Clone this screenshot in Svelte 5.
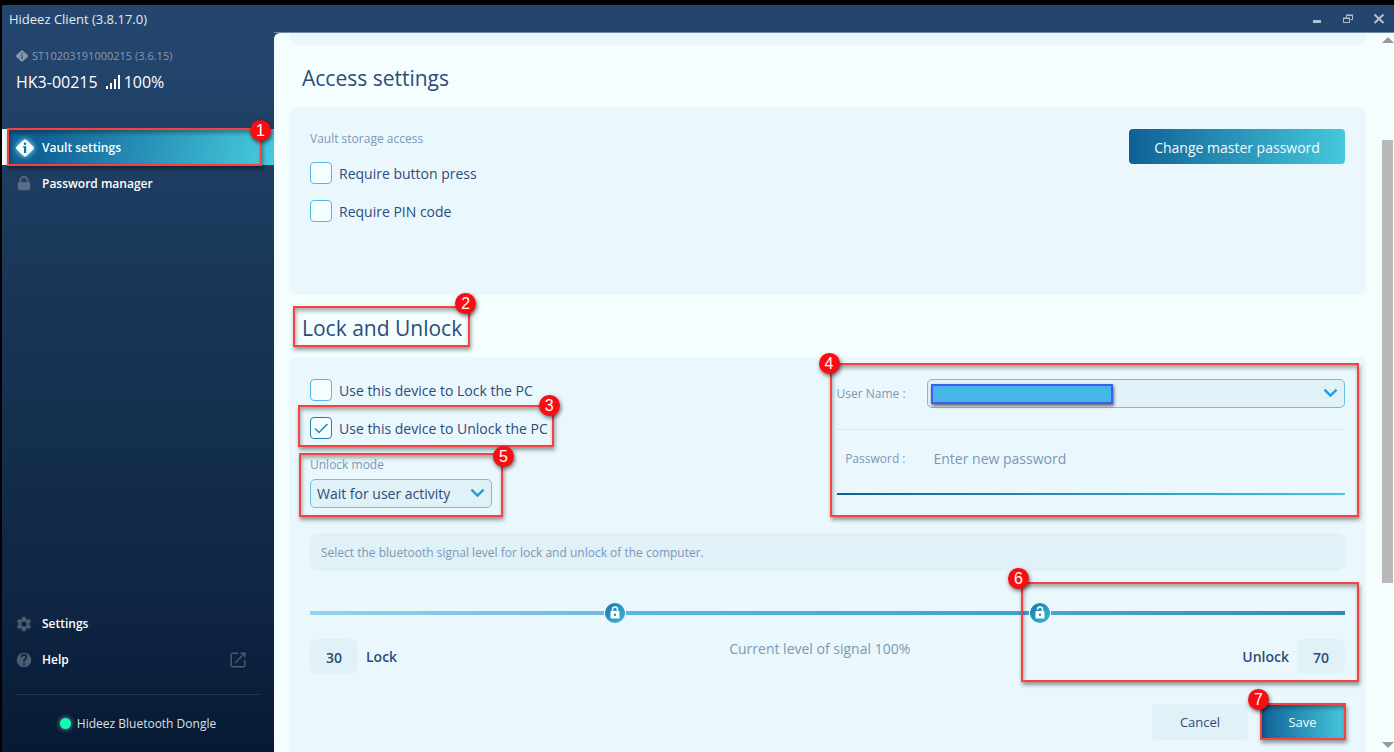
<script>
  let requireButton = $state(false);
  let requirePin = $state(false);
  let useLock = $state(false);
  let useUnlock = $state(true);
  let lockLevel = $state(30);
  let unlockLevel = $state(70);

  // The track overshoots the 0-100 scale slightly at both ends.
  const place = (level) => 50 + (level - 50) * 1.025;
</script>

{#snippet callout(n, kind)}
  <span class="callout {kind}"><span class="badge">{n}</span></span>
{/snippet}

{#snippet vault()}
  <svg viewBox="0 0 18 18" aria-hidden="true">
    <path d="M7.600 1a2 2 0 0 1 2.800 0l6.900 6.600a2 2 0 0 1 0 2.800L10.400 17a2 2 0 0 1-2.800 0L.7 10.400a2 2 0 0 1 0-2.800z" fill="currentColor" />
    <circle cx="9" cy="4.800" r="1.200" fill="var(--hole)" />
    <path d="M7 7.200h3.200V14H8V8.500H7z" fill="var(--hole)" />
  </svg>
{/snippet}

{#snippet chevron()}
  <svg class="chevron" viewBox="0 0 16 10" aria-hidden="true">
    <path d="M1.500 1.500 8 7.800l6.500-6.300" fill="none" stroke="#1d9fda" stroke-width="2.600" />
  </svg>
{/snippet}

{#snippet tick()}
  <svg class="tick" viewBox="0 0 22 22" aria-hidden="true">
    <path d="m5 11.500 4 4L17.500 7" fill="none" stroke="#2288b5" stroke-width="1.500" />
  </svg>
{/snippet}

<div class="window">
  <header>
    <span class="title">Hideez Client (3.8.17.0)</span>
    <div class="controls">
      <button aria-label="Minimize"><svg viewBox="0 0 12 12"><path d="M2 8.500h8" stroke="currentColor" stroke-width="3" /></svg></button>
      <button aria-label="Restore"><svg viewBox="0 0 12 12" fill="none" stroke="currentColor"><path d="M1.500 5.500h6v4h-6zM1 5h7M4.500 4.500v-2h6v4h-2M4 2h7" /></svg></button>
      <button aria-label="Close"><svg viewBox="0 0 12 12"><path d="m1.500 1.500 9 8.500m0-8.500-9 8.500" stroke="currentColor" stroke-width="2" /></svg></button>
    </div>
  </header>

  <div class="body">
    <aside>
      <div class="device">
        <div class="serial">{@render vault()}<span>ST10203191000215 (3.6.15)</span></div>
        <div class="name">
          <span>HK3-00215</span>
          <svg viewBox="0 0 14 14" fill="currentColor" aria-hidden="true"><path d="M0 11h2v3H0zM4 8h2v6H4zM8 4h2v10H8zM12 0h2v14h-2z" /></svg>
          <span>100%</span>
        </div>
      </div>

      <nav>
        <a href="#vault" class="active">
          {@render vault()}<span>Vault settings</span>
          {@render callout(1, 'c1')}
        </a>
        <a href="#passwords">
          <svg viewBox="0 0 18 18" aria-hidden="true"><path d="M5 8V5a4 4 0 0 1 8 0V8" fill="none" stroke="currentColor" stroke-width="2" /><rect x="2" y="7" width="14" height="9" rx="1" fill="currentColor" /></svg>
          <span>Password manager</span>
        </a>
      </nav>

      <nav class="lower">
        <a href="#settings">
          <svg viewBox="1 1 22 22" fill="currentColor" aria-hidden="true"><path d="M19.400 13a7.500 7.500 0 0 0 0-2l2.100-1.600a.5.5 0 0 0 .1-.6l-2-3.500a.5.5 0 0 0-.6-.2l-2.500 1a7.300 7.300 0 0 0-1.700-1l-.4-2.600a.5.5 0 0 0-.5-.5h-4a.5.5 0 0 0-.5.5L9 5.100a7.300 7.300 0 0 0-1.700 1l-2.500-1a.5.5 0 0 0-.6.2l-2 3.500a.5.5 0 0 0 .1.600L4.500 11a7.500 7.500 0 0 0 0 2l-2.200 1.600a.5.5 0 0 0-.1.600l2 3.500c.1.200.4.300.6.200l2.500-1c.5.400 1.100.7 1.700 1l.4 2.600c0 .3.200.5.5.5h4c.3 0 .5-.2.500-.5l.4-2.600a7.300 7.300 0 0 0 1.700-1l2.500 1c.2.100.5 0 .6-.2l2-3.500a.5.5 0 0 0-.1-.6zM12 15.500a3.500 3.500 0 1 1 0-7 3.500 3.500 0 0 1 0 7z" /></svg>
          <span>Settings</span>
        </a>
        <a href="#help">
          <svg viewBox="1 1 22 22" fill="currentColor" aria-hidden="true"><path d="M12 2a10 10 0 1 0 0 20 10 10 0 0 0 0-20zm1.200 17h-2.400v-2.400h2.400zm2.300-8.700-1 1c-.9.900-1.300 1.500-1.300 3.200h-2.400V14c0-1.200.5-2.300 1.300-3.100l1.300-1.300A2 2 0 1 0 10 8.200H7.600a4.400 4.400 0 1 1 8.800 0c0 .8-.4 1.600-.9 2.100z" /></svg>
          <span>Help</span>
          <svg class="external" viewBox="0 0 16 16" fill="none" stroke="currentColor" stroke-width="1.400" aria-hidden="true"><path d="M8 1.200H2.200a1 1 0 0 0-1 1v11.600a1 1 0 0 0 1 1h11.600a1 1 0 0 0 1-1V8M5 11l9.500-9.500M10.500 1.200h4.300v4.300" /></svg>
        </a>
      </nav>
      <div class="dongle"><i></i><span>Hideez Bluetooth Dongle</span></div>
    </aside>

    <main>
      <div class="content">
        <div class="card previous"></div>
        <h2>Access settings</h2>
        <section class="card access">
          <div>
            <p class="caption">Vault storage access</p>
            <label class="check"><span class="box"><input type="checkbox" bind:checked={requireButton} />{@render tick()}</span>Require button press</label>
            <label class="check"><span class="box"><input type="checkbox" bind:checked={requirePin} />{@render tick()}</span>Require PIN code</label>
          </div>
          <button class="primary master">Change master password</button>
        </section>

        <h2><span class="anchor">Lock and Unlock{@render callout(2, 'c2')}</span></h2>
        <section class="card lock">
          <div class="columns">
            <div class="options">
              <label class="check"><span class="box"><input type="checkbox" bind:checked={useLock} />{@render tick()}</span>Use this device to Lock the PC</label>
              <label class="check"><span class="box"><input type="checkbox" bind:checked={useUnlock} />{@render tick()}</span>Use this device to Unlock the PC{@render callout(3, 'c3')}</label>
              <div class="mode">
                <label for="mode" class="caption">Unlock mode</label>
                <div class="field">
                  <select id="mode"><option>Wait for user activity</option></select>
                  {@render chevron()}
                </div>
                {@render callout(5, 'c5')}
              </div>
            </div>

            <div class="account">
              <div class="line user">
                <label for="user">User Name :</label>
                <div class="field">
                  <select id="user"><option></option></select>
                  <span class="redacted"></span>
                  {@render chevron()}
                </div>
              </div>
              <div class="line secret">
                <label for="password">Password :</label>
                <input id="password" type="password" placeholder="Enter new password" />
              </div>
              {@render callout(4, 'c4')}
            </div>
          </div>

          <p class="hint">Select the bluetooth signal level for lock and unlock of the computer.</p>

          <div class="signal">
            <div class="slider">
              <span class="track low" style="width:{place(lockLevel)}%"></span>
              <span class="track mid" style="width:{place(unlockLevel) - place(lockLevel)}%"></span>
              <span class="track high"></span>
              <input type="range" aria-label="Lock level" bind:value={lockLevel} />
              <input type="range" aria-label="Unlock level" bind:value={unlockLevel} />
              <span class="thumb" style="left:{place(lockLevel)}%">
                <svg viewBox="0 0 20 20" aria-hidden="true"><path d="M7.500 9V6.500a2.500 2.500 0 0 1 5 0V9" fill="none" stroke="#fff" stroke-width="1.500" /><rect x="5.500" y="8" width="9" height="7.500" rx="1" fill="#fff" /><circle cx="10" cy="11.800" r="1.200" fill="#238bb3" /></svg>
              </span>
              <span class="thumb" style="left:{place(unlockLevel)}%">
                <svg viewBox="0 0 20 20" aria-hidden="true"><path d="M7.500 6.500a2.500 2.500 0 0 1 5 0V9" fill="none" stroke="#fff" stroke-width="1.500" /><rect x="5.500" y="8" width="9" height="7.500" rx="1" fill="#fff" /><circle cx="10" cy="11.800" r="1.200" fill="#238bb3" /></svg>
              </span>
            </div>
            <div class="levels">
              <label><input class="value" bind:value={lockLevel} />Lock</label>
              <output>Current level of signal 100%</output>
              <label>Unlock<input class="value" bind:value={unlockLevel} /></label>
            </div>
            {@render callout(6, 'c6')}
          </div>

          <div class="actions">
            <button class="cancel">Cancel</button>
            <button class="primary save">Save{@render callout(7, 'c7')}</button>
          </div>
        </section>
      </div>
      <div class="scrollbar">
        <svg viewBox="0 0 12 6" aria-hidden="true"><path d="M0 6 6 0l6 6z" fill="#999" /></svg>
        <div class="rail"><span></span></div>
        <svg viewBox="0 0 12 6" aria-hidden="true"><path d="m0 0 6 6 6-6z" fill="#999" /></svg>
      </div>
    </main>
  </div>
</div>

<style>
  :global(body) { background: #000; }
  * { box-sizing: border-box; }
  .window {
    height: 100vh;
    padding: 5px 0 0 2px;
    display: flex;
    flex-direction: column;
    overflow: hidden;
    font-family: "Open Sans", "Noto Sans", sans-serif;
    font-size: 14px;
    line-height: 20px;
    color: #2d4c78;
  }
  button, input, select { font: inherit; color: inherit; margin: 0; border: 0; background: none; }
  button { padding: 2px 0 0; }
  p, h2 { margin: 0; }
  a { color: inherit; text-decoration: none; }

  header { flex: none; height: 28px; display: flex; align-items: center; justify-content: space-between; padding: 0 9px 0 7px; border-bottom: 1px solid #6f88a5; color: #e3eaf1; background: #24466e; }
  .title { font-size: 13px; }
  .controls { display: flex; gap: 19px; color: #b4c0ce; }
  .controls button { width: 12px; height: 12px; padding: 0; display: block; }
  .controls svg { display: block; width: 12px; height: 12px; }

  .body { flex: 1; min-height: 0; display: flex; background: #24466e; }
  aside { position: relative; flex: none; width: 272px; display: flex; flex-direction: column; color: #fff; margin-top: -1px; background: linear-gradient(#24466e, #193657 35%, #0f2543 80%, #071a33); }
  .device { height: 97px; padding: 14px 14px 0; }
  .serial { display: flex; align-items: center; gap: 4px; font-size: 11px; color: #8799b0; }
  .serial svg { width: 12px; height: 12px; --hole: #3f5b7e; }
  .name { display: flex; align-items: center; gap: 4px; margin-top: 4px; font-size: 16px; line-height: 24px; }
  .name svg { width: 14px; height: 14px; margin-left: 4px; }

  nav a { position: relative; height: 36px; display: flex; align-items: center; padding: 0 28px 0 14px; gap: 10px; font-size: 12px; font-weight: 600; }
  nav a svg { width: 16px; height: 16px; color: #5a6e89; }
  nav .active { background: linear-gradient(100deg, #0f6095 12%, #45c8dc 96%); border-left: 5px solid #f5feff; padding: 1px 0 0 9px; gap: 8px; margin-bottom: 1px; }
  nav .active > svg { width: 18px; height: 18px; color: #f5feff; --hole: #1a6f9f; filter: drop-shadow(0 0 3px #9ff); }
  nav .external { margin-left: auto; }
  .lower { margin-top: auto; padding-bottom: 16px; }
  .lower a svg { color: #4c5b70; }
  .dongle { flex: none; margin: 0 14px; height: 58px; border-top: 1px solid #1e3350; display: flex; align-items: center; justify-content: center; gap: 6px; font-size: 12px; color: #d9e0e8; }
  .dongle i { width: 11px; height: 11px; border-radius: 50%; background: #0fffb4; box-shadow: 0 0 5px #7ab8a5; }

  main { flex: 1; min-width: 0; display: flex; background: #f5feff; border-top-left-radius: 6px; overflow: hidden; }
  .content { flex: 1; min-width: 0; overflow: hidden; padding: 0 16px 0 15px; }
  .card { background: #eaf8fd; border-radius: 8px; padding: 22px 21px; }
  .previous { height: 12px; padding: 0; border-radius: 0 0 8px 8px; }
  h2 { height: 62px; padding: 18px 13px 0; font-size: 21px; line-height: 30px; font-weight: 400; }
  .anchor { position: relative; display: inline-block; }
  .caption { display: block; font-size: 12px; line-height: 20px; color: #7c97b5; }
  .check { position: relative; width: fit-content; display: flex; gap: 7px; height: 22px; line-height: 24px; margin-bottom: 16px; }
  .box { position: relative; width: 22px; height: 22px; }
  .box input { appearance: none; display: block; width: 22px; height: 22px; border: 1px solid #53b9e4; border-radius: 4px; background: #f5feff; }
  .tick { position: absolute; inset: 0; display: none; pointer-events: none; }
  .box input:checked + .tick { display: block; }
  .box input:checked { border-color: #1f82ae; }

  .access { height: 188px; display: flex; justify-content: space-between; }
  .access .caption { margin-bottom: 13px; }
  .primary { color: #f2fbff; background: linear-gradient(90deg, #0f6095, #45c8dc); border-radius: 4px; }
  .master { width: 216px; height: 35px; }

  .lock { min-height: 480px; }
  .columns { display: flex; justify-content: space-between; height: 154px; }
  .mode { position: relative; width: 182px; }
  .mode .caption { margin-bottom: 4px; }
  .field { position: relative; height: 29px; }
  .field select { appearance: none; display: block; width: 100%; height: 100%; padding: 1px 6px 0; border: 1px solid #6cc0e6; border-radius: 5px; background: #e0f1f8; font-size: 14px; }
  .chevron { position: absolute; right: 7px; top: 9px; width: 15px; height: 10px; pointer-events: none; }
  .account { position: relative; width: calc(50% - 9px); font-size: 12px; color: #7c97b5; height: 117px; }
  .line { display: flex; align-items: center; gap: 21px; }
  .line label { width: 69px; text-align: right; white-space: nowrap; }
  .user { height: 51px; border-bottom: 1px solid #cdeafa; padding-bottom: 21px; }
  .user .field { flex: 1; }
  .redacted { position: absolute; left: 4px; top: 5px; width: 182px; height: 20px; border: 2px solid #3f5cf3; background: #45b6e8; box-shadow: 1px 2px 3px #667; }
  .secret { height: 65px; padding-bottom: 5px; border-bottom: 2px solid; border-image: linear-gradient(90deg, #0f6095, #45c8dc) 1; }
  .secret input { flex: 1; min-width: 0; padding: 0 7px; font-size: 14px; outline: 0; }
  .secret input::placeholder { color: #7c97b5; opacity: 1; }

  .hint { height: 38px; padding: 0 11px; border-radius: 8px; background: #e0f1f8; font-size: 12px; line-height: 40px; color: #7c97b5; }
  .signal { position: relative; padding-top: 32px; }
  .slider { position: relative; display: flex; height: 20px; align-items: center; }
  .track { height: 4px; }
  .low { background: linear-gradient(90deg, #92d3ef, #6cbbe0); }
  .mid { background: linear-gradient(90deg, #5bb9e4, #3da0cf); }
  .high { flex: 1; background: linear-gradient(90deg, #4da5cd, #318bb7); }
  .slider input { position: absolute; inset: 0; width: 100%; height: 20px; opacity: 0; }
  .thumb { position: absolute; width: 20px; height: 20px; margin-left: -10px; border-radius: 50%; background: linear-gradient(135deg, #1475a4, #3fbcd5); box-shadow: 0 0 0 1px #eaf8fd; pointer-events: none; }
  .thumb svg { display: block; }
  .levels { display: flex; justify-content: space-between; align-items: start; margin-top: 16px; }
  .levels label { display: flex; align-items: center; gap: 8px; font-weight: 600; line-height: 22px; }
  .value { width: 48px; height: 35px; padding: 2px 0 0; text-align: center; border-radius: 8px; background: #e0f1f8; font-size: 14px; }
  output { color: #7c97b5; }
  .actions { display: flex; justify-content: end; gap: 12px; margin-top: 30px; }
  .actions button { height: 36px; font-size: 13px; padding: 0; }
  .cancel { width: 96px; background: #e0f1f8; border-radius: 4px; }
  .save { position: relative; width: 85px; }

  .scrollbar { flex: none; width: 12px; padding: 4px 0; display: flex; flex-direction: column; justify-content: space-between; }
  .scrollbar svg { width: 12px; height: 6px; display: block; }
  .rail { flex: 1; margin: 5px 0; display: flex; flex-direction: column; }
  .rail::before { content: ""; flex: 92; }
  .rail::after { content: ""; flex: 154; }
  .rail span { flex: 443; background: #b8b8b8; width: 11px; }

  /* Numbered tutorial markers laid over the controls they point at. */
  .callout { position: absolute; z-index: 2; border: 2px solid #fa4142; box-shadow: 1px 3px 4px #0006, inset 1px 3px 4px #0005; pointer-events: none; }
  .badge { position: absolute; width: 21px; height: 21px; border-radius: 50%; background: #fb0c12; color: #fff; font: 400 16px/21px "Liberation Sans", Arial, sans-serif; text-align: center; box-shadow: 1px 2px 4px #0009; top: -12px; right: -11px; }
  .c1 { inset: -1px 12px -1px 0; }
  .c1 .badge { top: -10px; right: -11px; }
  .c2 { inset: -7px -8px -4px -9px; }
  .c2 .badge { top: -15px; right: -8px; }
  .c3 { inset: -12px -6px -8px -12px; }
  .c3 .badge { right: -8px; }
  .c5 { inset: -2px -11px -9px -11px; }
  .c5 .badge { top: -9px; right: -13px; }
  .c4 { inset: -16px -14px -21px -7px; }
  .c4 .badge { left: -13px; }
  .c6 { inset: 11px -14px -8px 68.7%; }
  .c6 .badge { left: -15px; top: -16px; }
  .c7 { inset: -1px -1px 0 0; }
  .c7 .badge { left: -14px; top: -16px; }
</style>
